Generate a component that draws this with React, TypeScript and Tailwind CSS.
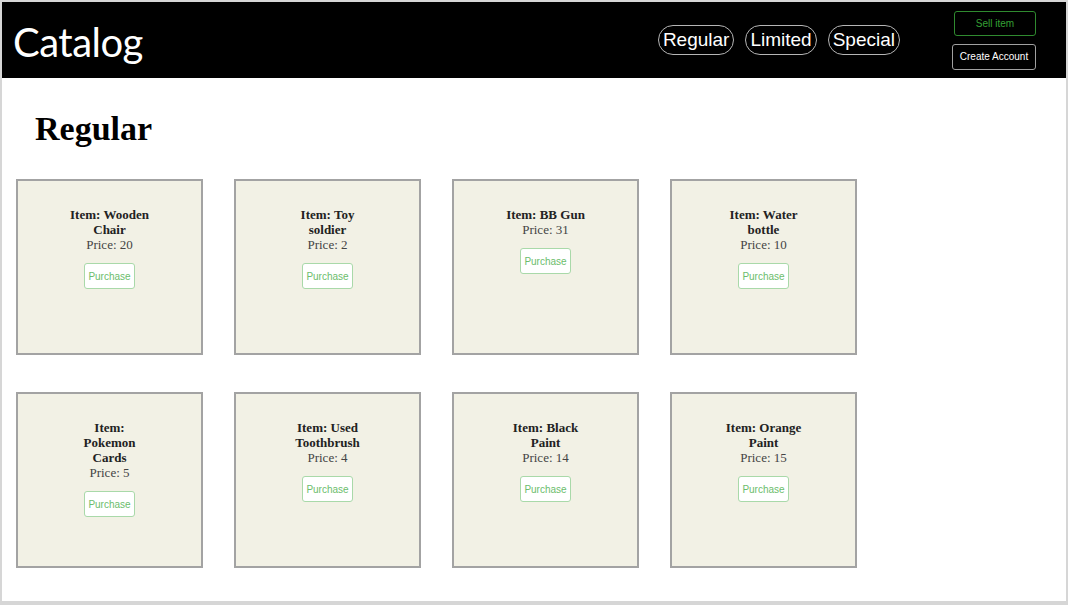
const items = [
  { name: 'Wooden Chair', price: 20 },
  { name: 'Toy soldier', price: 2 },
  { name: 'BB Gun', price: 31 },
  { name: 'Water bottle', price: 10 },
  { name: 'Pokemon Cards', price: 5 },
  { name: 'Used Toothbrush', price: 4 },
  { name: 'Black Paint', price: 14 },
  { name: 'Orange Paint', price: 15 },
];

const tabs = ['Regular', 'Limited', 'Special'];

const Header = () => (
  <header className="flex items-center h-[76px] bg-black pl-[11px] pr-[30px]">
    <h1 className="font-['Lato',sans-serif] text-[40px] leading-none text-white tracking-[-0.5px] pt-[4px]">
      Catalog
    </h1>
    <nav className="ml-auto flex items-center gap-[11px]">
      {tabs.map((tab) => (
        <button
          key={tab}
          className="h-[30px] px-[4px] rounded-full border border-[#b5b5b5] text-white text-[19px] leading-[22px] font-['Liberation_Sans',Arial,sans-serif]"
        >
          {tab}
        </button>
      ))}
    </nav>
    <div className="ml-[52px] flex flex-col items-end gap-[8px] font-['Liberation_Sans',Arial,sans-serif]">
      <button className="w-[82px] h-[25px] rounded-[3px] border border-[#2f8a2f] text-[#35a035] text-[10px]">
        Sell item
      </button>
      <button className="w-[84px] h-[26px] rounded-[3px] border border-[#a0a0a0] text-white text-[10px]">
        Create Account
      </button>
    </div>
  </header>
);

const ItemCard = ({ name, price }: { name: string; price: number }) => (
  <div className="w-[187px] h-[176px] bg-[#f2f1e5] border-2 border-[#a3a3a3] pt-[26px] flex flex-col items-center font-['Liberation_Serif','Times_New_Roman',serif]">
    <div className="w-[83px] text-center text-[13px] leading-[15px]">
      <p className="font-bold text-[#222]">Item: {name}</p>
      <p className="text-[#444]">Price: {price}</p>
    </div>
    <button className="mt-[11px] w-[51px] h-[26px] bg-white rounded-[3px] border border-[#a9d9a9] text-[#6cbd6c] text-[10px] font-['Liberation_Sans',Arial,sans-serif]">
      Purchase
    </button>
  </div>
);

export default function App() {
  return (
    <div className="w-[1068px] h-[605px] bg-white border-[#d6d6d6] border-t-2 border-x-2 border-b-4 overflow-hidden">
      <Header />
      <main className="pl-[14px]">
        <h2 className="mt-[32px] ml-[19px] font-['Liberation_Serif','Times_New_Roman',serif] font-bold text-[34px] leading-[38px] text-black">
          Regular
        </h2>
        <div className="mt-[31px] grid grid-cols-[repeat(4,187px)] gap-x-[31px] gap-y-[37px]">
          {items.map((item) => (
            <ItemCard key={item.name} name={item.name} price={item.price} />
          ))}
        </div>
      </main>
    </div>
  );
}
